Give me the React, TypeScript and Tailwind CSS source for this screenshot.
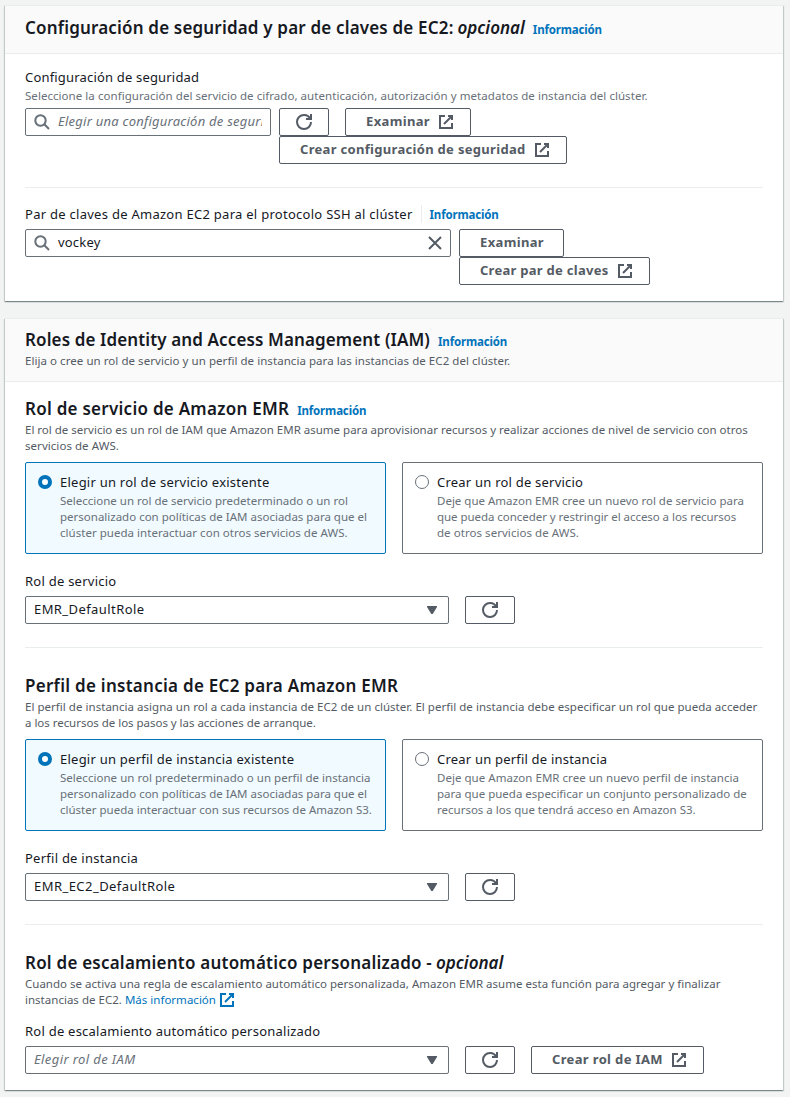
import React, { ReactNode } from "react";

type IconProps = { className?: string };

function ExternalIcon({ className = "" }: IconProps) {
  return (
    <svg viewBox="0 0 16 16" className={`h-4 w-4 shrink-0 fill-none stroke-current stroke-2 ${className}`}>
      <path d="M10 2h4v4" />
      <path d="m6 10 8-8" />
      <path d="M14 9.048V14H2V2h5" />
    </svg>
  );
}

function RefreshIcon() {
  return (
    <svg viewBox="0 0 16 16" className="h-4 w-4 fill-none stroke-current stroke-2">
      <path d="M10 5h5V0" />
      <path d="M15 8a6.957 6.957 0 0 1-7 7 6.957 6.957 0 0 1-7-7 6.957 6.957 0 0 1 7-7 6.87 6.87 0 0 1 6.3 4" />
    </svg>
  );
}

function SearchIcon() {
  return (
    <svg viewBox="0 0 16 16" className="h-4 w-4 shrink-0 fill-none stroke-[#687078] stroke-2">
      <circle cx="6.5" cy="6.5" r="5.2" />
      <path d="m15 15-4.7-4.7" />
    </svg>
  );
}

function CloseIcon() {
  return (
    <svg viewBox="0 0 16 16" className="h-4 w-4 shrink-0 fill-none stroke-[#545b64] stroke-2">
      <path d="m2 2 12 12M14 2 2 14" />
    </svg>
  );
}

function CaretIcon() {
  return (
    <svg viewBox="0 0 16 16" className="h-4 w-4 shrink-0 fill-[#545b64]">
      <path d="M3 4h10v1l-4.3 7H7.3L3 5z" />
    </svg>
  );
}

function Card({ children, className = "" }: { children: ReactNode; className?: string }) {
  return (
    <section
      className={`w-[778px] border-t border-[#eaeded] bg-white shadow-[0_1px_1px_0_rgba(0,28,36,0.3),1px_1px_1px_0_rgba(0,28,36,0.15),-1px_1px_1px_0_rgba(0,28,36,0.15)] ${className}`}
    >
      {children}
    </section>
  );
}

function Info({ className = "" }: { className?: string }) {
  return (
    <a className={`text-[11.5px] font-bold tracking-[-0.16px] text-[#0073bb] ${className}`}>Información</a>
  );
}

function Title({ children }: { children: ReactNode }) {
  return <h2 className="text-[17px] leading-[22px] font-semibold">{children}</h2>;
}

function Hint({ children, className = "text-[#687078]" }: { children: ReactNode; className?: string }) {
  return <p className={`text-[11.5px] leading-4 ${className}`}>{children}</p>;
}

function Button({ children, className = "" }: { children: ReactNode; className?: string }) {
  return (
    <button
      className={`flex h-7 shrink-0 items-center rounded-[2px] border border-[#545b64] bg-white text-[13px] font-bold text-[#545b64] ${className}`}
    >
      {children}
    </button>
  );
}

function RefreshButton() {
  return (
    <Button className="w-[50px] justify-center">
      <RefreshIcon />
    </Button>
  );
}

function Select({ children }: { children: ReactNode }) {
  return (
    <div className="flex h-7 w-[424px] items-center justify-between rounded-[2px] border border-[#687078] pr-2 pl-2 text-[13px]">
      {children}
      <CaretIcon />
    </div>
  );
}

function Tile({ selected, title, children }: { selected?: boolean; title: ReactNode; children: ReactNode }) {
  return (
    <div
      className={`flex h-[92px] w-[361px] gap-2 rounded-[2px] border pt-2 pl-3 ${
        selected ? "border-[#0073bb] bg-[#f1faff]" : "border-[#687078] bg-white"
      }`}
    >
      <span
        className={`mt-1 h-[14px] w-[14px] shrink-0 rounded-full bg-white ${
          selected ? "border-4 border-[#0073bb]" : "border border-[#687078]"
        }`}
      />
      <div>
        <div className="text-[13px] leading-[22px]">{title}</div>
        <Hint>{children}</Hint>
      </div>
    </div>
  );
}

function Divider() {
  return <div className="h-px bg-[#eaeded]" />;
}

export default function App() {
  return (
    <main className="flex h-[1097px] w-[790px] flex-col gap-4 overflow-hidden bg-[#f2f3f3] pt-[5px] pl-[5px] font-['Noto_Sans',sans-serif] whitespace-nowrap text-[#16191f]">
      <Card className="h-[296px]">
        <header className="flex h-12 items-center border-b border-[#eaeded] bg-[#fafafa] px-5 pb-1">
          <Title>
            <span className="tracking-[0.175px]">Configuración de seguridad y par de claves de EC2:</span>
            <i className="ml-1">opcional</i>
          </Title>
          <Info className="mt-1 ml-2" />
        </header>
        <div className="px-5 pt-3">
          <div className="text-[13px] leading-[22px] tracking-[0.18px]">Configuración de seguridad</div>
          <Hint className="tracking-[0.05px] text-[#687078]">
            Seleccione la configuración del servicio de cifrado, autenticación, autorización y metadatos de instancia del
            clúster.
          </Hint>
          <div className="mt-1 flex items-start gap-2">
            <div className="flex h-7 w-[246px] items-center rounded-[2px] border border-[#687078] px-2 text-[13px]">
              <SearchIcon />
              <input
                className="ml-2 w-[204px] bg-transparent tracking-[0.25px] outline-none placeholder:text-[#687078] placeholder:italic"
                placeholder="Elegir una configuración de seguridad"
              />
            </div>
            <div>
              <div className="flex gap-4">
                <RefreshButton />
                <Button className="w-[126px] gap-2 pl-5 tracking-[0.35px]">
                  Examinar <ExternalIcon />
                </Button>
              </div>
              <Button className="w-[288px] gap-2 pl-5 tracking-[0.31px]">
                Crear configuración de seguridad <ExternalIcon />
              </Button>
            </div>
          </div>
          <div className="mt-[23px]">
            <Divider />
          </div>
          <div className="mt-[15px] flex items-center text-[13px] leading-[22px] tracking-[0.274px]">
            Par de claves de Amazon EC2 para el protocolo SSH al clúster
            <span className="mr-2 ml-2 h-[18px] w-px bg-[#eaeded]" />
            <Info className="pt-px leading-[21px]" />
          </div>
          <div className="mt-1 flex items-start gap-2">
            <div className="flex h-7 w-[426px] items-center rounded-[2px] border border-[#687078] pr-[7px] pl-2 text-[13px]">
              <SearchIcon />
              <span className="ml-2 flex-1 tracking-[0.2px]">vockey</span>
              <CloseIcon />
            </div>
            <div>
              <Button className="w-[105px] pl-5 tracking-[0.35px]">Examinar</Button>
              <Button className="w-[191px] gap-2 pl-5 tracking-[0.275px]">
                Crear par de claves <ExternalIcon />
              </Button>
            </div>
          </div>
        </div>
      </Card>

      <Card className="mt-px h-[772px]">
        <header className="h-[63px] border-b border-[#eaeded] bg-[#fafafa] px-5 pt-[10px]">
          <div className="flex items-center">
            <Title>
              <span className="tracking-[0.12px]">Roles de Identity and Access Management (IAM)</span>
            </Title>
            <Info className="mt-1 ml-2" />
          </div>
          <Hint className="mt-0.5 tracking-[0.054px] text-[#545b64]">
            Elija o cree un rol de servicio y un perfil de instancia para las instancias de EC2 del clúster.
          </Hint>
        </header>

        <div className="px-5 pt-4">
          <div className="flex items-center">
            <Title>
              <span className="tracking-[0.26px]">Rol de servicio de Amazon EMR</span>
            </Title>
            <Info className="mt-1 ml-2" />
          </div>
          <Hint className="mt-0.5 text-[#545b64]">
            El rol de servicio es un rol de IAM que Amazon EMR asume para aprovisionar recursos y realizar acciones de
            nivel de servicio con otros
            <br />
            <span className="tracking-[0.05px]">servicios de AWS.</span>
          </Hint>
          <div className="mt-2 flex gap-4">
            <Tile selected title={<span className="tracking-[0.24px]">Elegir un rol de servicio existente</span>}>
              Seleccione un rol de servicio predeterminado o un rol
              <br />
              personalizado con políticas de IAM asociadas para que el
              <br />
              <span className="tracking-[0.03px]">clúster pueda interactuar con otros servicios de AWS.</span>
            </Tile>
            <Tile title={<span className="tracking-[0.22px]">Crear un rol de servicio</span>}>
              Deje que Amazon EMR cree un nuevo rol de servicio para
              <br />
              <span className="tracking-[-0.05px]">que pueda conceder y restringir el acceso a los recursos</span>
              <br />
              <span className="tracking-[0.05px]">de otros servicios de AWS.</span>
            </Tile>
          </div>
          <div className="mt-4 text-[13px] leading-[22px] tracking-[0.25px]">Rol de servicio</div>
          <div className="mt-1 flex gap-4">
            <Select>
              <span className="tracking-[0.42px]">EMR_DefaultRole</span>
            </Select>
            <RefreshButton />
          </div>

          <div className="mt-[23px]">
            <Divider />
          </div>

          <div className="mt-[27px]">
            <Title>
              <span className="tracking-[0.27px]">Perfil de instancia de EC2 para Amazon EMR</span>
            </Title>
          </div>
          <Hint className="mt-0.5 text-[#545b64]">
            <span className="tracking-[0.033px]">
              El perfil de instancia asigna un rol a cada instancia de EC2 de un clúster. El perfil de instancia debe
              especificar un rol que pueda acceder
            </span>
            <br />
            <span className="tracking-[-0.03px]">a los recursos de los pasos y las acciones de arranque.</span>
          </Hint>
          <div className="mt-2 flex gap-4">
            <Tile selected title={<span className="tracking-[0.24px]">Elegir un perfil de instancia existente</span>}>
              <span className="tracking-[0.03px]">Seleccione un rol predeterminado o un perfil de instancia</span>
              <br />
              personalizado con políticas de IAM asociadas para que el
              <br />
              clúster pueda interactuar con sus recursos de Amazon S3.
            </Tile>
            <Tile title={<span className="tracking-[0.2px]">Crear un perfil de instancia</span>}>
              <span className="tracking-[0.03px]">Deje que Amazon EMR cree un nuevo perfil de instancia</span>
              <br />
              para que pueda especificar un conjunto personalizado de
              <br />
              recursos a los que tendrá acceso en Amazon S3.
            </Tile>
          </div>
          <div className="mt-4 text-[13px] leading-[22px] tracking-[0.25px]">Perfil de instancia</div>
          <div className="mt-1 flex gap-4">
            <Select>
              <span className="tracking-[0.45px]">EMR_EC2_DefaultRole</span>
            </Select>
            <RefreshButton />
          </div>

          <div className="mt-[23px]">
            <Divider />
          </div>

          <div className="mt-[27px]">
            <Title>
              <span className="tracking-[0.218px]">Rol de escalamiento automático personalizado -</span>
              <i className="ml-1">opcional</i>
            </Title>
          </div>
          <Hint className="mt-0.5 tracking-[0.014px] text-[#545b64]">
            Cuando se activa una regla de escalamiento automático personalizada, Amazon EMR asume esta función para
            agregar y finalizar
            <br />
            instancias de EC2.{" "}
            <a className="text-[#0073bb]">
              Más información <ExternalIcon className="inline-block align-[-4px]" />
            </a>
          </Hint>
          <div className="mt-3 text-[13px] leading-[22px] tracking-[0.24px]">
            Rol de escalamiento automático personalizado
          </div>
          <div className="mt-1 flex gap-4">
            <Select>
              <i className="tracking-[0.396px] text-[#687078]">Elegir rol de IAM</i>
            </Select>
            <RefreshButton />
            <Button className="w-[173px] gap-2 pl-5 tracking-[0.35px]">
              Crear rol de IAM <ExternalIcon />
            </Button>
          </div>
        </div>
      </Card>
    </main>
  );
}
